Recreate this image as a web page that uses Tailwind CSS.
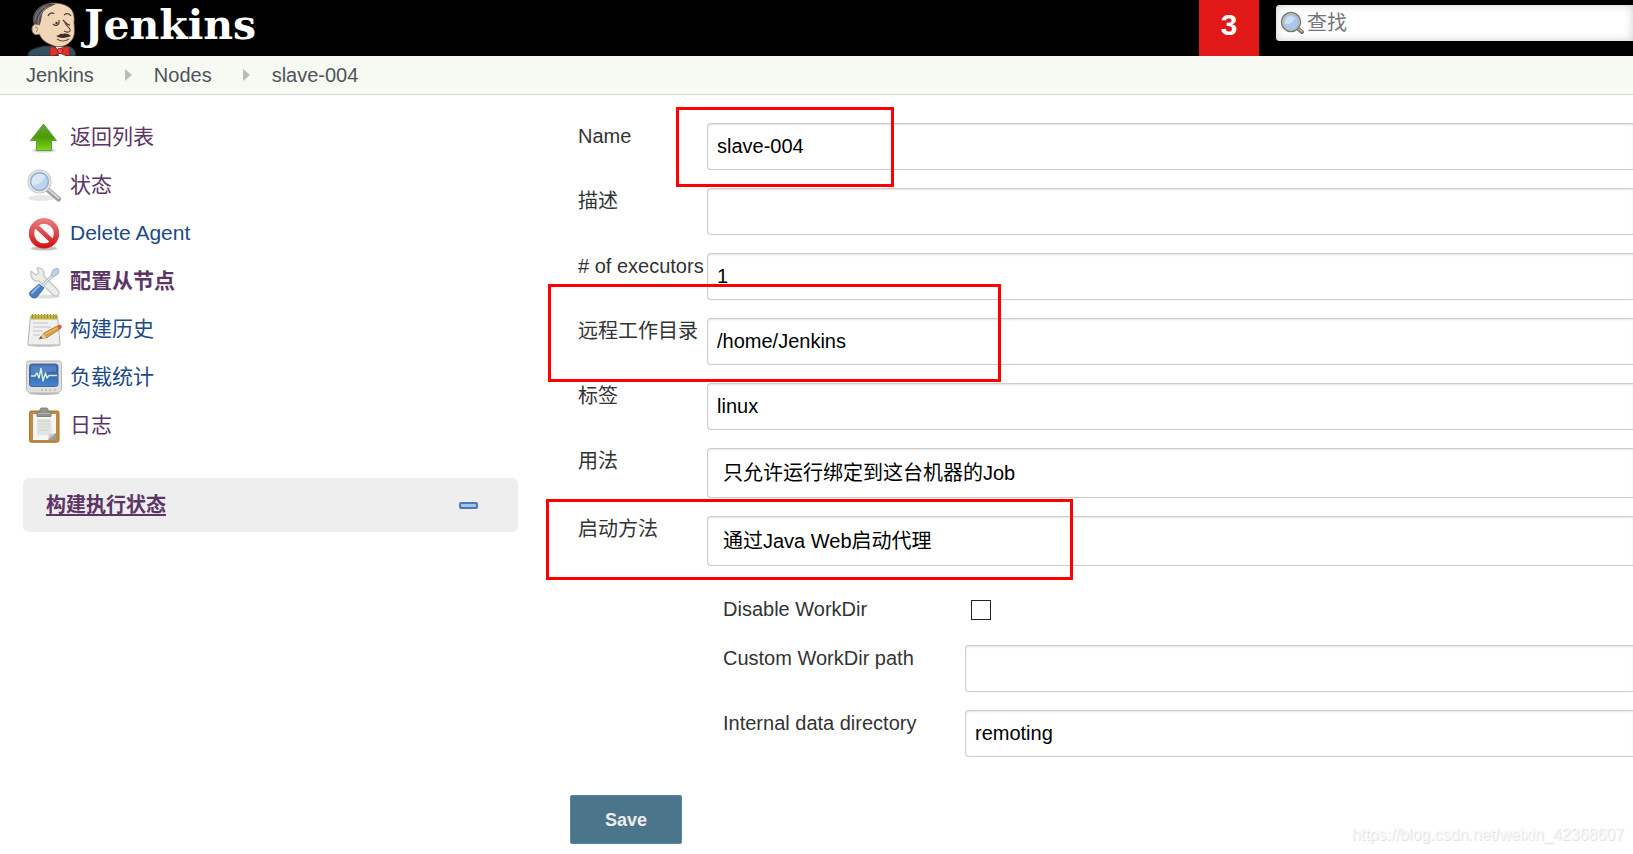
<!DOCTYPE html>
<html lang="zh-CN">
<head>
<meta charset="utf-8">
<meta name="viewport" content="width=device-width, initial-scale=1">
<title>slave-004 [Jenkins]</title>
<script src="https://cdn.jsdelivr.net/npm/@tailwindcss/browser@4"></script>
</head>
<body class="relative min-h-screen overflow-x-hidden bg-white font-['Liberation_Sans','Noto_Sans_CJK_SC',sans-serif] text-[20px] leading-[26px] text-[#333]">

<header class="flex h-14 bg-black">
  <a href="#" class="flex pl-6 text-white">
    <svg class="h-14 w-14" viewBox="0 0 56 56" aria-hidden="true">
      <path d="M4 56C4 52 6 50 12 48L20 46H44C49 47 51 50 52 56Z" fill="#335061" stroke="#1b2c36" stroke-width="1"/>
      <path d="M32 47H44L41 56H35Z" fill="#fff"/>
      <path d="M12 28C7 20 9 11 18 6C25 2 36 2 43 6C49 9 51 15 50 23C51 31 51 37 47 41C43 46 36 48 30 46C22 43 17 40 15 33Z" fill="#f0d6b7" stroke="#5a4a40" stroke-width=".8"/>
      <path d="M12 27C7 20 8 12 17 7C21 4 27 3 32 4C25 7 19 10 18 15C17 20 17 23 15 26Z" fill="#4d4b4e"/>
      <path d="M11 21C11 15 14 10 22 6M14 24C14 17 17 11 25 6" fill="none" stroke="#8b898c" stroke-width="1"/>
      <path d="M15 25C11 23 8 26 8 29C8 34 12 36 16 34Z" fill="#f0d6b7"/>
      <path d="M14 25C10 23 8 26 8 29C8 33 11 36 15 34M11 27C14 27 14 30 12 32" fill="none" stroke="#8d7362" stroke-width="1"/>
      <path d="M24 16C25 13 29 12 30 14M40 15C42 13 45 13 47 16" fill="none" stroke="#4d3c32" stroke-width="1.3"/>
      <path d="M29 24C31 26 34 26 35 23V20M39 20C41 22 43 25 46 25" fill="none" stroke="#4d3c32" stroke-width="1.2"/>
      <circle cx="32.500" cy="23" r="1.200" fill="#333"/>
      <path d="M41 23C42 26 47 28 46 31C45 33 42 32 40 31" fill="none" stroke="#5a4235" stroke-width="1.1"/>
      <path d="M32 36C35 36 36 33 39 34C42 33 45 34 47 36C43 38 36 39 32 36Z" fill="#40302a"/>
      <path d="M33 39C37 42 42 41 45 39" fill="none" stroke="#76503f" stroke-width="1.1"/>
      <path d="M26 47C29 46 32 48 34 50C37 48 41 46 45 47L46 55C42 56 39 55 36 53C33 55 30 56 26 56Z" fill="#d9332f" stroke="#8b1c18" stroke-width=".8"/>
      <rect x="33.500" y="48.500" width="5" height="5" rx="1.500" fill="#ef4a45" stroke="#8b1c18" stroke-width=".8"/>
    </svg>
    <span class="pl-1 font-['DejaVu_Serif',serif] text-[41px] font-bold leading-[50px]">Jenkins</span>
  </a>
  <a href="#" class="ml-auto w-[60px] bg-[#e11818] text-center text-[30px] font-bold leading-[50px] text-white">3</a>
  <form class="w-[374px] pl-[17px] pt-[5px]">
    <div class="flex h-9 items-center gap-[3px] rounded-l bg-white pl-1 shadow-[inset_0_0_8px_#ccc]">
      <svg class="size-6 shrink-0" viewBox="0 0 24 24" aria-hidden="true">
        <path d="M17 17L22 21" stroke="#73746f" stroke-width="4" stroke-linecap="round"/>
        <path d="M18 17.500L22 20.500" stroke="#c2c3bd" stroke-width="1.500" stroke-linecap="round"/>
        <circle cx="11" cy="11" r="9" fill="#a8c8eb" stroke="#777871" stroke-width="2.500"/>
        <circle cx="11" cy="11" r="8.300" fill="none" stroke="#d7d8d2" stroke-width="1"/>
        <path d="M5 11C5 6 11 3 15 7C13 12 9 14 5 13Z" fill="#dceafa" opacity=".7"/>
      </svg>
      <input type="text" aria-label="查找" placeholder="查找" class="w-full min-w-0 bg-transparent outline-none placeholder:text-[#757575]">
    </div>
  </form>
</header>

<nav aria-label="breadcrumb" class="flex h-[39px] items-center border-b border-[#d3d7cf] bg-[#f6faf2] pl-[26px] text-[#4d545d]">
  <a href="#">Jenkins</a>
  <svg class="ml-[31px] mr-[22px] h-3 w-[7px]" viewBox="0 0 7 12" aria-hidden="true"><path d="M0 0L7 6L0 12Z" fill="#babdb6"/></svg>
  <a href="#">Nodes</a>
  <svg class="ml-[31px] mr-[22px] h-3 w-[7px]" viewBox="0 0 7 12" aria-hidden="true"><path d="M0 0L7 6L0 12Z" fill="#babdb6"/></svg>
  <a href="#">slave-004</a>
</nav>

<div class="flex">
  <aside class="w-[541px] shrink-0 px-[23px] pt-[18px]">
    <ul class="pl-[3px] text-[21px] text-[#204a87]">
      <li><a href="#" class="flex h-12 items-center gap-2 text-[#5c3566]">
        <svg class="size-9" viewBox="0 0 36 36" aria-hidden="true">
          <defs><linearGradient id="green" x1="0" y1="0" x2="0" y2="1"><stop offset="0" stop-color="#6aa63c"/><stop offset=".5" stop-color="#4e9a06"/><stop offset="1" stop-color="#7bdb1c"/></linearGradient></defs>
          <ellipse cx="18" cy="31.500" rx="12" ry="2" fill="#bbb" opacity=".6"/>
          <path d="M17.500 5L30.500 21.500H25.500V31.500H10.500V21.500H4.500Z" fill="url(#green)" stroke="#5fa03a" stroke-width="1" stroke-linejoin="round"/>
        </svg>返回列表</a></li>
      <li><a href="#" class="flex h-12 items-center gap-2 text-[#5c3566]">
        <svg class="size-9" viewBox="0 0 36 36" aria-hidden="true">
          <ellipse cx="15" cy="31" rx="13" ry="3" fill="#ddd" opacity=".7"/>
          <path d="M22 23L32.500 32" stroke="#a0a19d" stroke-width="5" stroke-linecap="round"/>
          <path d="M22.500 22.500L32.500 31" stroke="#d8d8d5" stroke-width="2" stroke-linecap="round"/>
          <circle cx="13.500" cy="14.500" r="10.500" fill="#bcd5ef" stroke="#c0c2be" stroke-width="3"/>
          <circle cx="13.500" cy="14.500" r="10.500" fill="none" stroke="#e6e7e4" stroke-width="1.500"/>
          <circle cx="13.500" cy="14.500" r="8.800" fill="none" stroke="#7fa8d6" stroke-width="1"/>
          <path d="M6 15C5 9 13 4 19 9C17 15 12 18 6 18Z" fill="#e1edfa" opacity=".75"/>
        </svg>状态</a></li>
      <li><a href="#" class="flex h-12 items-center gap-2">
        <svg class="size-9" viewBox="0 0 36 36" aria-hidden="true">
          <defs><linearGradient id="red" gradientUnits="userSpaceOnUse" x1="0" y1="3" x2="0" y2="33"><stop offset="0" stop-color="#ea8080"/><stop offset=".5" stop-color="#dc4a4a"/><stop offset="1" stop-color="#d01010"/></linearGradient></defs>
          <ellipse cx="18" cy="33.500" rx="13" ry="2" fill="#999" opacity=".6"/>
          <circle cx="18" cy="18.500" r="12.500" fill="#f8f8f8" stroke="#d66" stroke-width="5.500"/>
          <circle cx="18" cy="18.500" r="12.500" fill="none" stroke="url(#red)" stroke-width="4.500"/>
          <path d="M9.500 10.500L26.500 26.500" stroke="url(#red)" stroke-width="4.500"/>
        </svg>Delete Agent</a></li>
      <li><a href="#" class="flex h-12 items-center gap-2 font-bold text-[#5c3566]">
        <svg class="size-9" viewBox="0 0 36 36" aria-hidden="true">
          <ellipse cx="20" cy="33.500" rx="14" ry="2" fill="#ccc" opacity=".6"/>
          <path d="M5 8L10 12L13 10L11 5C15 4 19 7 18 13L32 27C35 31 31 35 27 32L13 18C8 19 4 15 5 8Z" fill="#ececea" stroke="#c3c5c1" stroke-width="1.200" stroke-linejoin="round"/>
          <path d="M17 22L27 12" stroke="#a9b3bd" stroke-width="3"/>
          <path d="M17 22L27 12" stroke="#dfe5ec" stroke-width="1.400"/>
          <path d="M25 12L27 7L31 5L33 7L32 11L27 14Z" fill="#bfd2e5" stroke="#9fb5cb" stroke-width="1"/>
          <path d="M13 21L18 25L11 34C8 37 2 33 4 29Z" fill="#4a80c0" stroke="#4471aa" stroke-width="1"/>
          <path d="M13 23L6 30" stroke="#8fb5e2" stroke-width="2" stroke-linecap="round"/>
        </svg>配置从节点</a></li>
      <li><a href="#" class="flex h-12 items-center gap-2">
        <svg class="size-9" viewBox="0 0 36 36" aria-hidden="true">
          <ellipse cx="18" cy="34" rx="17" ry="2" fill="#bbb" opacity=".7"/>
          <path d="M4.500 5H31.500L34 32C34 33.500 33.500 34 32 34H4C2.500 34 2 33.500 2 32Z" fill="#f0f0ef" stroke="#b4b5b1" stroke-width="1"/>
          <path d="M5 4H31V8.500H5Z" fill="#c9b945"/>
          <path d="M6.500 3V7.500M9.500 3V7.500M12.500 3V7.500M15.500 3V7.500M18.500 3V7.500M21.500 3V7.500M24.500 3V7.500M27.500 3V7.500M30 3V7.500" stroke="#a39431" stroke-width="1.200"/>
          <path d="M7 12H22M7 16H25M7 20H17M7 24H14" stroke="#c4c5c1" stroke-width="1"/>
          <path d="M13 28L18 22L31 15L33.500 18.500L21 26.500Z" fill="#d99e42" stroke="#b07a2a" stroke-width=".8"/>
          <path d="M19 23L32 16.500" stroke="#f0c67a" stroke-width="1"/>
          <path d="M13 28L17.500 22.500L20 26.500Z" fill="#e6cfa6"/><path d="M13 28L15 25L16.500 27.200Z" fill="#555"/>
          <path d="M31 15L33.500 13.500C35.500 13.500 36.500 16 35 17.500L33 19Z" fill="#e25a52"/>
        </svg>构建历史</a></li>
      <li><a href="#" class="flex h-12 items-center gap-2">
        <svg class="size-9" viewBox="0 0 36 36" aria-hidden="true">
          <defs><linearGradient id="blue" x1="0" y1="0" x2="0" y2="1"><stop offset="0" stop-color="#3a66ab"/><stop offset=".5" stop-color="#3468b5"/><stop offset="1" stop-color="#4a86d4"/></linearGradient></defs>
          <ellipse cx="18" cy="34.500" rx="15" ry="1.500" fill="#999" opacity=".7"/>
          <path d="M3 2H33C35 2 35.500 3.500 35.500 5.500V28C35.500 31 34 34 31 34H5C2 34 .5 31 .5 28V5.500C.5 3.500 1 2 3 2Z" fill="#e0e1de" stroke="#b5b7b2" stroke-width="1"/>
          <rect x="3.500" y="5" width="28.500" height="22.500" rx="2.500" fill="url(#blue)" stroke="#4a6896" stroke-width="1"/>
          <path d="M5 6.500H30V13C22 12 14 15 5 17Z" fill="#88afe0" opacity=".35"/>
          <path d="M5 17H9L11 14L13 19L15 9.500L17 22L19.500 14L21 19L23 16.500H31" fill="none" stroke="#d1f3ca" stroke-width="1.500" stroke-linejoin="round"/>
          <path d="M15 31H17M19 31H21M23 31H25" stroke="#b4b6b1" stroke-width="1.500"/><circle cx="29" cy="31" r="1.300" fill="#c4c6c1"/>
        </svg>负载统计</a></li>
      <li><a href="#" class="flex h-12 items-center gap-2 text-[#5c3566]">
        <svg class="size-9" viewBox="0 0 36 36" aria-hidden="true">
          <ellipse cx="18" cy="35.200" rx="14" ry=".8" fill="#999" opacity=".7"/>
          <rect x="3.500" y="4" width="29.500" height="31" rx="1.500" fill="#c18a3e" stroke="#a8732a" stroke-width="1"/>
          <path d="M7 7H30V33H7Z" fill="#f6f6f5"/>
          <path d="M11 12H25V14L26 28H11Z" fill="#e3e4e2"/>
          <path d="M12 14H24M12 17H24M12 20H24M12 23H22" stroke="#d3d4d1" stroke-width="1"/>
          <path d="M22 33L23 27.500L30 26Z" fill="#c9cac7"/><path d="M22 33L30 26V33Z" fill="#999b96"/>
          <path d="M11 5H14V2.500C14 1.500 15 1 16 1H20C21 1 22 1.500 22 2.500V5H25V9.500H11Z" fill="#92948f" stroke="#80827d" stroke-width="1"/>
          <path d="M12 6.500H24" stroke="#b0b2ad" stroke-width="1"/>
        </svg>日志</a></li>
    </ul>
    <section class="mt-[29px] flex h-[54px] items-center justify-between rounded-md bg-[#eee] pl-[23px] pr-10">
      <a href="#" class="font-bold text-[#5c3566] underline decoration-2 underline-offset-2">构建执行状态</a>
      <button type="button" aria-label="collapse" class="h-[7px] w-[19px] rounded-xs border-2 border-[#4a7ab5] bg-[#a5c3e6]"></button>
    </section>
  </aside>

  <main class="relative min-w-0 flex-1 pl-[37px] pt-7">
    <form>
      <div class="grid grid-cols-[129px_1fr] items-start gap-y-[18px]">
        <label for="name">Name</label>
        <input id="name" type="text" value="slave-004" class="h-[47px] w-full min-w-0 rounded-l border border-r-0 border-[#ccc] pl-[9px] text-black shadow-[inset_0_1px_2px_#e5e5e5]">
        <label for="desc">描述</label>
        <input id="desc" type="text" class="h-[47px] w-full min-w-0 rounded-l border border-r-0 border-[#ccc] pl-[9px] text-black shadow-[inset_0_1px_2px_#e5e5e5]">
        <label for="executors"># of executors</label>
        <input id="executors" type="text" value="1" class="h-[47px] w-full min-w-0 rounded-l border border-r-0 border-[#ccc] pl-[9px] text-black shadow-[inset_0_1px_2px_#e5e5e5]">
        <label for="remote">远程工作目录</label>
        <input id="remote" type="text" value="/home/Jenkins" class="h-[47px] w-full min-w-0 rounded-l border border-r-0 border-[#ccc] pl-[9px] text-black shadow-[inset_0_1px_2px_#e5e5e5]">
        <label for="labels">标签</label>
        <input id="labels" type="text" value="linux" class="h-[47px] w-full min-w-0 rounded-l border border-r-0 border-[#ccc] pl-[9px] text-black shadow-[inset_0_1px_2px_#e5e5e5]">
        <label for="usage">用法</label>
        <select id="usage" class="h-[50px] w-full min-w-0 appearance-none rounded-l border border-r-0 border-[#ccc] bg-white pl-[15px] text-black shadow-[inset_0_1px_2px_#e5e5e5]"><option>只允许运行绑定到这台机器的Job</option></select>
        <label for="launch">启动方法</label>
        <select id="launch" class="h-[50px] w-full min-w-0 appearance-none rounded-l border border-r-0 border-[#ccc] bg-white pl-[15px] text-black shadow-[inset_0_1px_2px_#e5e5e5]"><option>通过Java Web启动代理</option></select>
      </div>
      <div class="grid grid-cols-[242px_1fr] items-start gap-y-[18px] pl-[145px] pt-[30px]">
        <label for="nowork">Disable WorkDir</label>
        <div class="h-[31px] pl-[6px] pt-1"><input id="nowork" type="checkbox" class="block size-5 appearance-none border border-[#222] bg-white"></div>
        <label for="workdir">Custom WorkDir path</label>
        <input id="workdir" type="text" class="h-[47px] w-full min-w-0 rounded-l border border-r-0 border-[#ccc] pl-[9px] text-black shadow-[inset_0_1px_2px_#e5e5e5]">
        <label for="datadir">Internal data directory</label>
        <input id="datadir" type="text" value="remoting" class="h-[47px] w-full min-w-0 rounded-l border border-r-0 border-[#ccc] pl-[9px] text-black shadow-[inset_0_1px_2px_#e5e5e5]">
      </div>
      <button type="submit" class="-ml-2 mt-[38px] block h-[49px] w-28 rounded-xs border border-[#5788a1] bg-[#4b758b] text-[18px] font-bold text-[#eee]">Save</button>
    </form>
    <!-- highlight frames over the fields -->
    <div class="pointer-events-none absolute left-[135px] top-3 h-20 w-[218px] border-3 border-[#f00]"></div>
    <div class="pointer-events-none absolute left-[7px] top-[189px] h-[98px] w-[453px] border-3 border-[#f00]"></div>
    <div class="pointer-events-none absolute left-[5px] top-[404px] h-[81px] w-[527px] border-3 border-[#f00]"></div>
  </main>
</div>
<div class="pointer-events-none absolute bottom-[6px] right-[9px] text-[16px] text-[#f8f8f8] [text-shadow:1px_1px_1px_#ddd]">https://blog.csdn.net/weixin_42368607</div>
</body>
</html>
